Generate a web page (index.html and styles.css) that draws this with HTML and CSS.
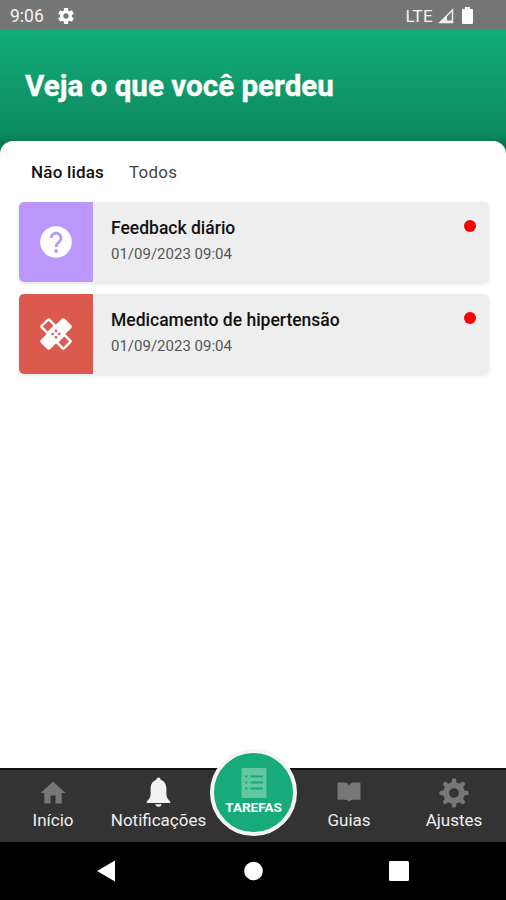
FILE: index.html
```html
<!DOCTYPE html>
<html lang="pt-BR">
<head>
    <meta charset="UTF-8">
    <meta name="viewport" content="width=device-width, initial-scale=1.0">
    <title>Notificações</title>
    <link rel="stylesheet" href="styles.css">
</head>
<body>

    <div class="status-bar">
        <span class="clock">9:06</span>
        <svg class="status-gear" width="18" height="18" viewBox="0 0 18 18">
            <g stroke="#fff" stroke-width="4.2"><path d="M9 1v16M2.1 5l13.8 8M2.1 13l13.8-8"/></g>
            <circle cx="9" cy="9" r="6" fill="#fff"/>
            <circle cx="9" cy="9" r="2.7" fill="#757575"/>
        </svg>
        <span class="network">LTE</span>
        <svg class="signal" width="16" height="16" viewBox="0 0 16 16"><path d="M14.5 2v12.5H2z" fill="none" stroke="#eee" stroke-width="1.5"/><path d="M9 8v7H1zM1 15l2-2.5h12V15z" fill="#eee"/></svg>
        <svg class="battery" width="11" height="17" viewBox="0 0 11 17"><path d="M3 0h5v2h2q1 0 1 1v13q0 1-1 1H1q-1 0-1-1V3q0-1 1-1h2z" fill="#fff"/></svg>
    </div>

    <div class="header">
        <h1>Veja o que você perdeu</h1>
    </div>

    <div class="content">
        <div class="tabs">
            <span class="tab selected">Não lidas</span>
            <span class="tab">Todos</span>
        </div>

        <div class="card">
            <div class="card-icon feedback">
                <svg width="32" height="32" viewBox="0 0 32 32"><circle cx="16" cy="16" r="15.8" fill="#fff"/><path d="M11.2 12a4.900 4.900 0 1 1 8.200 3.600c-2 1.700-3.300 2.400-3.300 5.400" fill="none" stroke="#bb96fb" stroke-width="2.8"/><circle cx="16.1" cy="25" r="1.9" fill="#bb96fb"/></svg>
            </div>
            <div class="card-text">
                <div class="card-title">Feedback diário</div>
                <div class="card-date">01/09/2023 09:04</div>
            </div>
            <span class="dot"></span>
        </div>

        <div class="card">
            <div class="card-icon medicine">
                <!-- two crossed bandages -->
                <svg width="32" height="32" viewBox="0 0 34 34">
                    <rect x="10" y="-1" width="14" height="36" rx="2.5" fill="#fff" transform="rotate(45 17 17)"/>
                    <g transform="rotate(-45 17 17)">
                        <rect x="10" y="-1" width="14" height="36" rx="2.5" fill="#fff"/>
                        <rect x="12.7" y="1.5" width="8.6" height="7.3" fill="#dc594e"/>
                        <rect x="12.7" y="25.2" width="8.6" height="7.3" fill="#dc594e"/>
                    </g>
                    <g fill="#dc594e">
                        <circle cx="17" cy="13.5" r="1.4"/>
                        <circle cx="20.5" cy="17" r="1.4"/>
                        <circle cx="17" cy="20.5" r="1.4"/>
                        <circle cx="13.5" cy="17" r="1.4"/>
                    </g>
                </svg>
            </div>
            <div class="card-text">
                <div class="card-title">Medicamento de hipertensão</div>
                <div class="card-date">01/09/2023 09:04</div>
            </div>
            <span class="dot"></span>
        </div>
    </div>

    <div class="nav">
        <div class="nav-item">
            <svg width="32" height="32" viewBox="0 0 32 32"><path d="M16 4.500 3.500 16h3.800v10.500h6.200v-8h5v8h6.200V16h3.800z" fill="#777"/></svg>
            <span>Início</span>
        </div>
        <div class="nav-item">
            <svg width="32" height="32" viewBox="0 0 32 32"><path d="M15.500.5c-1.500 0-2 1-2.200 2.300C9 4.200 7.600 8 7.600 12.500v4c0 4-1.500 5.500-3.800 8V26h23.400v-1.500c-2.300-2.500-3.800-4-3.800-8v-4c0-4.500-1.400-8.300-5.700-9.700C17.500 1.500 17 .5 15.500.5zM12.200 27.300a3.400 3.300 0 0 0 6.600 0z" fill="#f2f2f2"/></svg>
            <span>Notificações</span>
        </div>
        <div class="nav-item">
            <div class="tasks-button">
                <svg width="26" height="32" viewBox="0 0 26 32"><rect x=".5" y="1" width="25" height="30" rx="1" fill="#63c7a2"/><path d="M4 9.500h2.500M9.500 9.500H22M4 15.500h2.500M9.500 15.500H22M4 21.500h2.500M9.500 21.500H22" stroke="#1ba87b" stroke-width="2.2"/></svg>
                <span>TAREFAS</span>
            </div>
        </div>
        <div class="nav-item">
            <svg width="32" height="32" viewBox="0 0 32 32"><path d="M4.500 6.500q0-1 1-1h6q3 0 4.500 3.200 1.500-3.200 4.500-3.200h6q1 0 1 1v16.300h-7.500q-2.500 0-4 2-1.500-2-4-2H4.500z" fill="#777"/></svg>
            <span>Guias</span>
        </div>
        <div class="nav-item">
            <svg width="32" height="32" viewBox="0 0 32 32">
                <g stroke="#777" stroke-width="4.5" stroke-linecap="round">
                    <path d="M16 3.500v4M16 24.500v4M3.500 16h4M24.500 16h4M7.200 7.200l3 3M21.800 21.800l3 3M7.200 24.800l3-3M21.800 10.200l3-3"/>
                </g>
                <circle cx="16" cy="16" r="7.8" fill="none" stroke="#777" stroke-width="6"/>
            </svg>
            <span>Ajustes</span>
        </div>
    </div>

    <div class="system-bar">
        <svg width="20" height="22" viewBox="0 0 20 22"><path d="M0 11 18 .5v21z" fill="#fff"/></svg>
        <svg width="20" height="20" viewBox="0 0 20 20"><circle cx="10.5" cy="10" r="9.3" fill="#fff"/></svg>
        <svg width="20" height="20" viewBox="0 0 20 20"><rect width="20" height="20" rx="1.5" fill="#fff"/></svg>
    </div>

</body>
</html>
```
FILE: styles.css
```css
body {
    margin: 0;
    display: flex;
    flex-direction: column;
    height: 900px;
    background-color: white;
    font-family: Roboto, sans-serif;
    overflow: hidden;
}

svg {
    display: block;
    flex-shrink: 0;
}

.status-bar {
    display: flex;
    align-items: center;
    box-sizing: border-box;
    height: 30px;
    padding: 1px 33px 0 10px;
    background-color: #757575;
    color: #f4f4f4;
    font-size: 17.5px;
}

.status-gear {
    margin-left: 13px;
}

.network {
    margin-left: auto;
    font-size: 17px;
    letter-spacing: 0.3px;
}

.signal {
    margin-left: 5px;
}

.battery {
    margin-left: 8px;
}

.header {
    box-sizing: border-box;
    height: 123px;
    padding: 38px 25px 0;
    background: linear-gradient(#11ad79, #0e8a60 105px, #08794f 112px);
}

h1 {
    margin: 0;
    color: white;
    font-size: 29.6px;
    line-height: 37px;
    font-weight: 700;
    -webkit-text-stroke: 0.4px white;
}

.content {
    flex: 1;
    margin-top: -12px; /* sheet overlaps the header */
    padding: 0 17px 0 19px;
    background-color: white;
    border-radius: 13px 13px 0 0;
}

.tabs {
    display: flex;
    gap: 25px;
    height: 61px;
    padding-left: 12px;
    font-size: 17px;
    line-height: 63px;
}

.tab {
    color: #444;
    letter-spacing: 0.2px;
}

.tab.selected {
    color: #111;
    font-weight: 500;
}

.card {
    display: flex;
    height: 80px;
    margin-bottom: 12px;
    background-color: #eee;
    border-radius: 5px;
    box-shadow: 0 2px 4px rgba(0, 0, 0, 0.1);
}

.card-icon {
    display: flex;
    align-items: center;
    justify-content: center;
    box-sizing: border-box;
    width: 74px;
    padding-right: 1px;
    border-radius: 5px 0 0 5px;
}

.feedback {
    background-color: #bb96fb;
}

.medicine {
    background-color: #dc594e;
}

.card-text {
    flex: 1;
    padding: 15px 0 0 18px;
}

.card-title {
    color: #111;
    font-size: 17.5px;
    line-height: 22px;
    font-weight: 500;
}

.card-date {
    margin-top: 6px;
    color: #555;
    font-size: 15px;
    line-height: 18px;
}

.dot {
    width: 12px;
    height: 12px;
    margin: 18px 13px 0 0;
    background-color: red;
    border-radius: 50%;
}

.nav {
    display: grid;
    grid-template-columns: 106px 105px 85px 106px 104px;
    box-sizing: border-box;
    height: 74px;
    border-top: 2px solid #111;
    background-color: #333;
    color: #eee;
    font-size: 17px;
}

.nav-item {
    display: flex;
    flex-direction: column;
    align-items: center;
    padding-top: 7px;
}

.nav-item span {
    line-height: 22px;
    white-space: nowrap;
}

.tasks-button {
    display: flex;
    flex-direction: column;
    align-items: center;
    box-sizing: border-box;
    width: 87px;
    height: 87px;
    margin-top: -28px;
    padding-top: 14px;
    border: 4px solid #f5f5f5;
    border-radius: 50%;
    background-color: #17ab7b;
    color: white;
    font-size: 13.5px;
    font-weight: 700;
}

.tasks-button span {
    line-height: 17px;
}

.system-bar {
    display: grid;
    grid-template-columns: 20px 20px 20px;
    gap: 126px;
    align-items: center;
    justify-content: center;
    height: 58px;
    background-color: black;
}
```
